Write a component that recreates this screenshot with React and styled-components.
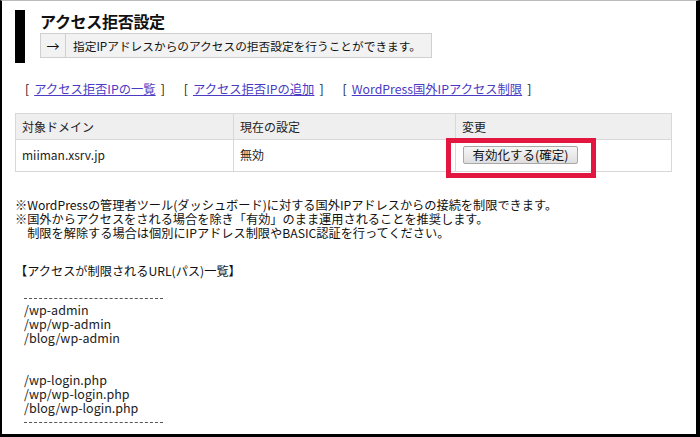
import React from 'react';
import styled, { createGlobalStyle } from 'styled-components';

const GlobalStyle = createGlobalStyle`
  html, body {
    margin: 0;
    padding: 0;
    background: #ffffff;
  }
  body {
    font-family: "Noto Sans CJK JP", "Liberation Sans", sans-serif;
    color: #111;
  }
`;

const Frame = styled.div`
  width: 700px;
  height: 437px;
  box-sizing: border-box;
  border-top: 1px solid #bbb;
  border-left: 2px solid #000;
  border-right: 4px solid #000;
  border-bottom: 3px solid #000;
  padding: 9px 0 0 13px;
  overflow: hidden;
  font-size: 12.2px;
  line-height: 14px;
`;

const Header = styled.div`
  border-left: 10px solid #000;
  padding: 0 0 5px 15px;
  width: fit-content;
`;

const Title = styled.h2`
  margin: 0;
  font-size: 16px;
  line-height: 23px;
  font-weight: bold;
  letter-spacing: -0.3px;
`;

const Lead = styled.div`
  display: flex;
  align-items: stretch;
  background: #f2f2f2;
  border: 1px solid #cfcfcf;
  height: 23px;
  font-size: 11.7px;
`;

const Arrow = styled.span`
  display: flex;
  align-items: center;
  justify-content: center;
  width: 24px;
  border-right: 1px solid #cfcfcf;
  font-size: 13px;
`;

const LeadText = styled.span`
  display: flex;
  align-items: center;
  padding: 0 10px 0 7px;
`;

const LinkRow = styled.div`
  display: flex;
  gap: 19px;
  margin: 18px 0 0 10px;
  font-size: 12.3px;
  line-height: 16px;
`;

const LinkItem = styled.span`
  white-space: nowrap;
`;

const Link = styled.a`
  color: #4a3bc4;
  text-decoration: underline;
  margin: 0 5px;
`;

const Table = styled.table`
  margin-top: 16px;
  width: 657px;
  table-layout: fixed;
  border-collapse: collapse;
  border: 1px solid #d8d8d8;
  font-size: 12px;
  color: #222;
`;

const Th = styled.th`
  background: #efefef;
  text-align: left;
  font-weight: normal;
  padding: 5px 6px;
  line-height: 15px;
  border: 1px solid #d8d8d8;
  width: ${(p) => (p.$w ? `${p.$w}px` : 'auto')};
`;

const Td = styled.td`
  padding: 6px 6px 7px;
  line-height: 18px;
  border: 1px solid #d8d8d8;
  position: relative;
`;

const Highlight = styled.div`
  position: absolute;
  left: -10px;
  top: -2px;
  width: 150px;
  height: 40px;
  box-sizing: border-box;
  border: 5px solid #e3163f;
  pointer-events: none;
`;

const Button = styled.button`
  display: block;
  margin-left: 1px;
  height: 18px;
  width: 115px;
  padding: 0;
  font-family: inherit;
  font-size: 12.5px;
  line-height: 16px;
  color: #111;
  background: linear-gradient(#f6f6f6, #dedede);
  border: 1px solid #a8a8a8;
  border-radius: 2px;
`;

const Notes = styled.div`
  margin-top: 26px;
  white-space: pre;
`;

const SubTitle = styled.div`
  margin-top: 24px;
`;

const PathList = styled.div`
  margin: 13px 0 0 9px;
  white-space: pre;
  font-size: 12.5px;
  line-height: 14px;
  color: #222;
`;

const Rule = styled.div`
  width: 139px;
  height: 7px;
  border-bottom: 1px dashed #555;
  margin-bottom: ${(p) => p.$gap}px;
`;

export default function App() {
  return (
    <>
      <GlobalStyle />
      <Frame>
        <Header>
          <Title>アクセス拒否設定</Title>
          <Lead>
            <Arrow>→</Arrow>
            <LeadText>指定IPアドレスからのアクセスの拒否設定を行うことができます。</LeadText>
          </Lead>
        </Header>

        <LinkRow>
          <LinkItem>[<Link href="#">アクセス拒否IPの一覧</Link>]</LinkItem>
          <LinkItem>[<Link href="#">アクセス拒否IPの追加</Link>]</LinkItem>
          <LinkItem>[<Link href="#">WordPress国外IPアクセス制限</Link>]</LinkItem>
        </LinkRow>

        <Table>
          <thead>
            <tr>
              <Th $w={205}>対象ドメイン</Th>
              <Th $w={209}>現在の設定</Th>
              <Th>変更</Th>
            </tr>
          </thead>
          <tbody>
            <tr>
              <Td>miiman.xsrv.jp</Td>
              <Td>無効</Td>
              <Td>
                <Button>有効化する(確定)</Button>
                <Highlight />
              </Td>
            </tr>
          </tbody>
        </Table>

        <Notes>
          {'※WordPressの管理者ツール(ダッシュボード)に対する国外IPアドレスからの接続を制限できます。\n'}
          {'※国外からアクセスをされる場合を除き「有効」のまま運用されることを推奨します。\n'}
          {'　制限を解除する場合は個別にIPアドレス制限やBASIC認証を行ってください。'}
        </Notes>

        <SubTitle>【アクセスが制限されるURL(パス)一覧】</SubTitle>

        <PathList>
          <Rule $gap={4} />
          {'/wp-admin\n/wp/wp-admin\n/blog/wp-admin\n\n\n/wp-login.php\n/wp/wp-login.php\n/blog/wp-login.php'}
          <Rule $gap={0} />
        </PathList>
      </Frame>
    </>
  );
}
